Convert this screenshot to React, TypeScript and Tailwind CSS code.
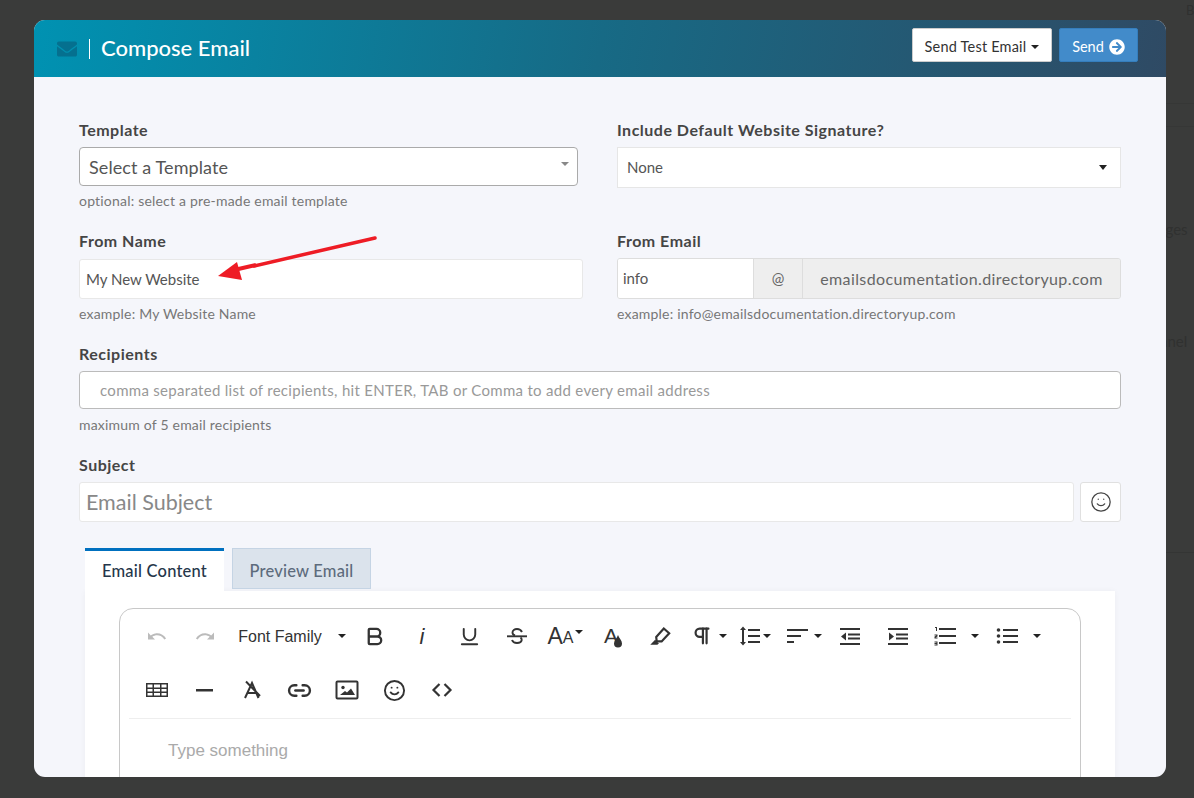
import { ReactNode } from 'react';
import { FaEnvelope, FaArrowCircleRight } from 'react-icons/fa';
import { Bold, Underline, Pilcrow, Link2, Smile } from 'lucide-react';

const FONT = 'font-[Lato,"Noto_Sans",sans-serif]';

function Caret({ className = '' }: { className?: string }) {
    return <span className={`inline-block w-0 h-0 border-x-[4px] border-x-transparent border-t-[4px] border-t-[#222] ${className}`} />;
}

function Label({ children }: { children: ReactNode }) {
    return <div className="h-5 leading-5 text-[16px] tracking-[0.5px] font-bold text-[#454545]">{children}</div>;
}

function Help({ children, className = 'mt-[5px]' }: { children: ReactNode; className?: string }) {
    return <div className={`h-5 leading-5 text-[14px] tracking-[0.2px] text-[#777] ${className}`}>{children}</div>;
}

function Icon({ children }: { children: ReactNode }) {
    return (
        <svg width="24" height="24" viewBox="0 0 24 24" fill="#333" className="shrink-0">
            {children}
        </svg>
    );
}

function Btn({ w = 'w-[48px]', children }: { w?: string; children: ReactNode }) {
    return <div className={`${w} h-[38px] flex items-center justify-center shrink-0 text-[#333]`}>{children}</div>;
}

export default function App() {
    return (
        <div className={`${FONT} relative w-[1194px] h-[798px] overflow-hidden bg-[#3a3b3a] pt-5 pl-[34px]`}>
            {/* page behind the overlay */}
            <div className="absolute left-[1166px] top-[103px] w-[28px] h-[24px] border-y border-[#363736]" />
            <div className="absolute left-[1166px] top-[552px] w-[28px] border-t border-[#343534]" />
            <div className="absolute left-[1158px] top-[218px] text-[15px] text-[#303130]">ages</div>
            <div className="absolute left-[1160px] top-[330px] text-[15px] text-[#303130]">anel</div>
            <div className="absolute left-[1186px] top-[1px] text-[13px] text-[#303130]">B</div>

            <div className="relative w-[1132px] h-[757px] rounded-[11px] overflow-hidden bg-[#f5f6fb]">
                {/* header */}
                <div className="h-[57px] flex items-center pl-[23px] pr-7 bg-[linear-gradient(100deg,#0092b2_0%,#176a85_50%,#2f4a64_100%)]">
                    <FaEnvelope className="text-[#05708f] text-[20px]" />
                    <div className="ml-3 h-5 border-l border-white" />
                    <div className="ml-[11px] -mt-[2px] text-[22px] font-medium text-white">Compose Email</div>
                    <div className="ml-auto flex gap-[7px] -mt-[7px]">
                        <div className="w-[140px] h-[34px] flex items-center justify-center gap-1 pt-1 rounded-[2px] bg-white border border-[#ccc] text-[14.5px] tracking-[0.2px] text-[#333]">
                            Send Test Email
                            <Caret className="ml-px" />
                        </div>
                        <div className="w-[79px] h-[34px] flex items-center justify-center gap-[5px] pt-1 rounded-[2px] bg-[#428bca] border border-[#357ebd] text-[14.5px] text-white">
                            Send
                            <FaArrowCircleRight className="text-[16px]" />
                        </div>
                    </div>
                </div>

                {/* form */}
                <div className="px-[45px] pt-[43px]">
                    <div className="grid grid-cols-[504px_504px] gap-x-[34px]">
                        <div>
                            <Label>Template</Label>
                            <div className="relative mt-[7px] w-[499px] h-[39px] flex items-center pl-[9px] pt-[2px] rounded-[4px] bg-white border border-[#aaa] text-[18px] tracking-[0.1px] text-[#555]">
                                Select a Template
                                <Caret className="absolute right-[8px] top-[14px] border-t-[#888]" />
                            </div>
                            <Help>optional: select a pre-made email template</Help>
                        </div>
                        <div>
                            <Label>Include Default Website Signature?</Label>
                            <div className="mt-[7px] h-[41px] flex items-center justify-between pl-[9px] pr-[13px] bg-white border border-[#e6e6e6] text-[15px] text-[#555]">
                                None
                                <Caret className="border-t-[#111] border-x-[4.5px] border-t-[5px]" />
                            </div>
                        </div>

                        <div className="mt-5">
                            <Label>From Name</Label>
                            <div className="mt-2 h-10 flex items-center pl-[6px] rounded-[3px] bg-white border border-[#e8e8e8] text-[15px] text-[#555]">
                                My New Website
                            </div>
                            <Help>example: My Website Name</Help>
                        </div>
                        <div className="mt-5">
                            <Label>From Email</Label>
                            <div className="mt-[7px] h-[41px] flex rounded-[3px] overflow-hidden border border-[#ddd] text-[15px] text-[#555]">
                                <div className="w-[135px] flex items-center pl-[5px] bg-white">info</div>
                                <div className="w-[50px] flex items-center justify-center bg-[#eee] border-x border-[#ddd] text-[#666]">@</div>
                                <div className="flex-1 flex items-center justify-center bg-[#eee] text-[16px] tracking-[0.4px] text-[#666]">emailsdocumentation.directoryup.com</div>
                            </div>
                            <Help>example: info@emailsdocumentation.directoryup.com</Help>
                        </div>
                    </div>

                    <div className="mt-5">
                        <Label>Recipients</Label>
                        <div className="mt-[7px] h-[38px] flex items-center pl-5 rounded-[4px] bg-white border border-[#bbb] text-[15px] tracking-[0.3px] text-[#999]">
                            comma separated list of recipients, hit ENTER, TAB or Comma to add every email address
                        </div>
                        <Help className="mt-[6px]">maximum of 5 email recipients</Help>
                    </div>

                    <div className="mt-5">
                        <Label>Subject</Label>
                        <div className="mt-[7px] flex gap-[6px]">
                            <div className="flex-1 h-10 flex items-center pl-[6px] rounded-[3px] bg-white border border-[#e8e8e8] text-[21.5px] text-[#888]">
                                Email Subject
                            </div>
                            <div className="w-[41px] h-10 flex items-center justify-center rounded-[3px] bg-white border border-[#e0e0e0] text-[#444]">
                                <Smile size={22} strokeWidth={1.4} />
                            </div>
                        </div>
                    </div>

                    {/* tabs */}
                    <div className="mt-[26px] ml-[6px] flex gap-2 items-start">
                        <div className="w-[139px] h-[43px] flex items-center justify-center bg-white border-t-[3px] border-[#0070bf] text-[16.5px] tracking-[0.2px] font-medium text-[#25364a]">
                            Email Content
                        </div>
                        <div className="w-[139px] h-[41px] flex items-center justify-center pt-[5px] bg-[#dbe3ec] border border-[#c5d4e4] text-[16.5px] tracking-[0.2px] font-medium text-[#5d6b7c]">
                            Preview Email
                        </div>
                    </div>
                    <div className="ml-[6px] w-[1030px] h-[200px] bg-white pt-[17px] pl-[34px] shadow-[0_0_6px_rgba(0,0,0,0.04)]">
                        <div className="w-[962px] h-[300px] rounded-t-[14px] border border-[#c8c8c8] [font-family:'Liberation_Sans',sans-serif]">
                            <div className="px-[13px] pt-[8px]">
                                <div className="flex items-center h-[38px]">
                                    <Btn><Icon><path fill="#bbb" d="M10.4 9.4c-1.7.3-3.2.9-4.6 2L3 8.5v7h7l-2.7-2.7c3.7-2.6 8.8-1.8 11.5 1.9.2.3.4.5.5.8l1.8-.9c-2.2-3.8-6.4-5.9-10.7-5.2z" /></Icon></Btn>
                                    <Btn><Icon><path fill="#bbb" d="M13.6 9.4c1.7.3 3.2.9 4.6 2L21 8.5v7h-7l2.7-2.7C13 10.2 7.9 11 5.2 14.7c-.2.3-.4.5-.5.8l-1.8-.9c2.2-3.8 6.4-5.9 10.7-5.2z" /></Icon></Btn>
                                    <Btn w="w-[121px]">
                                        <span className="ml-[5px] mt-px text-[16px] text-[#333]">Font Family</span>
                                        <Caret className="ml-[16px]" />
                                    </Btn>
                                    <Btn><Bold size={23} strokeWidth={2.4} /></Btn>
                                    <Btn><span className="italic text-[22px]">i</span></Btn>
                                    <Btn w="w-[47px]"><Underline size={23} strokeWidth={2} /></Btn>
                                    <Btn>
                                        <svg width="24" height="24" viewBox="0 0 24 24" fill="none" stroke="#333" strokeWidth="1.900">
                                            <path d="M17 8 C16 6 14 5 12 5 C9.500 5 7.500 6.500 7.500 8.500 C7.500 10 8.500 11 10 11.500 M15.500 13.500 C16.500 14.300 16.800 15 16.700 16 C16.300 18 14.200 19 12 19 C9.800 19 7.700 18 7 16" />
                                            <path d="M2 12.300 H22" />
                                        </svg>
                                    </Btn>
                                    <Btn>
                                        <span className="text-[23px] leading-none">A</span>
                                        <span className="text-[16px] leading-none mt-[4px]">A</span>
                                        <Caret className="ml-px -mt-2" />
                                    </Btn>
                                    <Btn>
                                        <span className="relative text-[21px] leading-none -mt-[2px] -ml-1">
                                            A
                                            <svg width="10" height="13" viewBox="0 0 10 13" fill="#333" className="absolute -right-[5px] top-[10px]">
                                                <path d="M5 0 C6 3 9 5.500 9 8.500 A4 4 0 0 1 1 8.500 C1 5.500 4 3 5 0Z" />
                                            </svg>
                                        </span>
                                    </Btn>
                                    <Btn w="w-[46px]">
                                        <svg width="26" height="26" viewBox="0 0 24 24" fill="none" stroke="#333" strokeWidth="2">
                                            <path d="M8.500 13 L15.500 5 L20.500 9.500 L13.500 17 L9 17 Z" />
                                            <path d="M3 20 L7.500 15.500 L11 19 L9.500 20 Z" fill="#333" stroke="none" />
                                        </svg>
                                    </Btn>
                                    <Btn w="w-[50px]">
                                        <Pilcrow size={22} strokeWidth={2.4} className="ml-[2px]" />
                                        <Caret className="ml-[6px]" />
                                    </Btn>
                                    <Btn w="w-[45px]">
                                        <svg width="24" height="24" viewBox="0 0 24 24" fill="#333" className="-ml-[3px]">
                                            <path d="M10 5h12v2H10zM10 11h12v2H10zM10 17h12v2H10zM4 6v12H2l3 3.500L8 18H6V6h2L5 2.500 2 6z" />
                                        </svg>
                                        <Caret className="ml-px" />
                                    </Btn>
                                    <Btn>
                                        <svg width="22" height="24" viewBox="0 0 22 24" fill="#333" className="ml-[3px]">
                                            <path d="M1 5h21v2H1zM1 11h14v2H1zM1 17h7v2H1z" />
                                        </svg>
                                        <Caret className="ml-[6px]" />
                                    </Btn>
                                    <Btn>
                                        <Icon><path d="M2 4h20v2H2zM10 9.500h12v2H10zM10 13.500h12v2H10zM2 19h20v2H2zM8 8.500v8L3 12.500z" /></Icon>
                                    </Btn>
                                    <Btn>
                                        <Icon><path d="M2 4h20v2H2zM10 9.500h12v2H10zM10 13.500h12v2H10zM2 19h20v2H2zM3 8.500v8l5-4z" /></Icon>
                                    </Btn>
                                    <Btn w="w-[62px]">
                                        <svg width="24" height="24" viewBox="0 0 24 24" fill="#333" className="ml-[6px]">
                                            <path d="M6 4h17v2H6zM6 11h17v2H6zM6 18h17v2H6zM2 3h2v4H3V4H2zM1.500 10.500h3v2l-2 1h2v1h-3v-2l2-1h-2zM1.500 17.500h3v4h-3v-1h2v-.5h-2v-1h2v-.5h-2z" />
                                        </svg>
                                        <Caret className="ml-[14px]" />
                                    </Btn>
                                    <Btn w="w-[61px]">
                                        <svg width="24" height="24" viewBox="0 0 24 24" fill="#333" className="ml-[6px]">
                                            <path d="M8 5h15v2H8zM8 11h15v2H8zM8 17h15v2H8z" />
                                            <circle cx="3.500" cy="6" r="1.800" /><circle cx="3.500" cy="12" r="1.800" /><circle cx="3.500" cy="18" r="1.800" />
                                        </svg>
                                        <Caret className="ml-[14px]" />
                                    </Btn>
                                </div>
                                <div className="flex items-center h-[38px] mt-4">
                                    <Btn w="w-[47.500px]">
                                        <Icon><path d="M1 5h22v14H1zM2.500 6.500v3h5v-3zM9 6.500v3h6v-3zM16.500 6.500v3h5v-3zM2.500 11v2.500h5V11zM9 11v2.500h6V11zM16.500 11v2.500h5V11zM2.500 15v2.500h5V15zM9 15v2.500h6V15zM16.500 15v2.500h5V15z" fillRule="evenodd" /></Icon>
                                    </Btn>
                                    <Btn w="w-[47.500px]"><Icon><path d="M4 11h17v2.500H4z" /></Icon></Btn>
                                    <Btn w="w-[47.500px]">
                                        <svg width="24" height="24" viewBox="0 0 24 24" fill="none" stroke="#333" strokeWidth="2">
                                            <path d="M5 20 L12 5 L18.500 20 M7 15 L16 15 M6 3.500 L20 18" />
                                        </svg>
                                    </Btn>
                                    <Btn w="w-[47.500px]"><Link2 size={25} strokeWidth={2.3} /></Btn>
                                    <Btn w="w-[47.500px]">
                                        <svg width="24" height="24" viewBox="0 0 24 24" fill="none">
                                            <rect x="1.500" y="3.500" width="21" height="17" rx="1" stroke="#333" strokeWidth="2" />
                                            <circle cx="8" cy="9.500" r="1.700" fill="#333" />
                                            <path d="M5 17 L10 13 L12 14.500 L16 10.500 L20 17 Z" fill="#333" />
                                        </svg>
                                    </Btn>
                                    <Btn w="w-[47.500px]"><Smile size={23} strokeWidth={2} /></Btn>
                                    <Btn w="w-[47.500px]">
                                        <svg width="24" height="24" viewBox="0 0 24 24" fill="none" stroke="#333" strokeWidth="2.200">
                                            <path d="M9.500 6 L3.500 12 L9.500 18 M14.500 6 L20.500 12 L14.500 18" />
                                        </svg>
                                    </Btn>
                                </div>
                            </div>
                            <div className="mx-[9px] mt-[9px] border-t border-[#eee]" />
                            <div className="pl-[48px] pt-[19px] text-[17px] text-[#aaa]">Type something</div>
                        </div>
                    </div>
                </div>

                {/* annotation arrow */}
                <svg width="400" height="80" viewBox="0 0 400 80" className="absolute left-[150px] top-[200px]">
                    <path d="M191 18 L70 46" stroke="#ee1c25" strokeWidth="3.500" strokeLinecap="round" />
                    <path d="M34 56 L53 42 L58 60 Z" fill="#ee1c25" />
                    <path d="M50 50 L72 45" stroke="#ee1c25" strokeWidth="4" />
                </svg>
            </div>
        </div>
    );
}
